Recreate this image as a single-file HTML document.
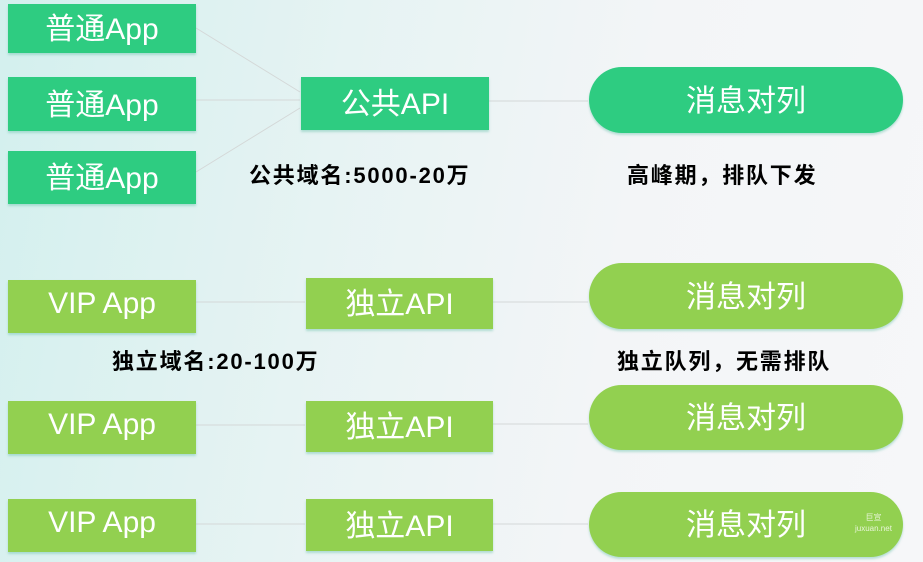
<!DOCTYPE html>
<html><head><meta charset="utf-8"><style>
body{margin:0;width:923px;height:562px;overflow:hidden;position:relative;
background:linear-gradient(100deg,#d3f0ee 0%,#e6f3f3 35%,#f3f5f7 65%,#f6f7f9 100%);
font-family:"Liberation Sans","Noto Sans CJK SC",sans-serif;}
.b{position:absolute;color:#fff;font-size:30px;display:flex;align-items:center;justify-content:center;box-shadow:0 2px 2px rgba(120,200,180,.5);box-sizing:border-box;padding-bottom:5px}
.g{background:#2ecc81}.l{background:#92d050}
.p{border-radius:34px;}
.t{position:absolute;font-weight:bold;font-size:22px;letter-spacing:1.8px;color:#000;white-space:nowrap}
svg{position:absolute;left:0;top:0}
</style></head><body>
<svg width="923" height="562"><g stroke="#d4d8d8" stroke-width="1" fill="none">
<line x1="196" y1="28" x2="300" y2="92"/><line x1="196" y1="100" x2="300" y2="100"/><line x1="196" y1="172" x2="300" y2="108"/>
<line x1="489" y1="101" x2="588" y2="101"/>
<line x1="196" y1="302" x2="305" y2="302"/><line x1="493" y1="302" x2="588" y2="302"/>
<line x1="196" y1="425" x2="305" y2="425"/><line x1="493" y1="424" x2="588" y2="424"/>
<line x1="196" y1="524" x2="305" y2="524"/><line x1="493" y1="524" x2="588" y2="524"/>
</g></svg>
<div class="b g" style="left:8px;top:4px;width:188px;height:49px">普通App</div>
<div class="b g" style="left:8px;top:77px;width:188px;height:54px">普通App</div>
<div class="b g" style="left:8px;top:151px;width:188px;height:53px">普通App</div>
<div class="b g" style="left:301px;top:77px;width:188px;height:53px">公共API</div>
<div class="b g p" style="left:589px;top:67px;width:314px;height:66px">消息对列</div>
<div class="t" style="left:249px;top:158px">公共域名:5000-20万</div>
<div class="t" style="left:627px;top:158px">高峰期，排队下发</div>
<div class="b l" style="left:8px;top:280px;width:188px;height:53px">VIP App</div>
<div class="b l" style="left:306px;top:278px;width:187px;height:51px">独立API</div>
<div class="b l p" style="left:589px;top:263px;width:314px;height:66px">消息对列</div>
<div class="t" style="left:112px;top:344px">独立域名:20-100万</div>
<div class="t" style="left:617px;top:344px">独立队列，无需排队</div>
<div class="b l" style="left:8px;top:401px;width:188px;height:53px">VIP App</div>
<div class="b l" style="left:306px;top:401px;width:187px;height:51px">独立API</div>
<div class="b l p" style="left:589px;top:385px;width:314px;height:65px">消息对列</div>
<div class="b l" style="left:8px;top:499px;width:188px;height:53px">VIP App</div>
<div class="b l" style="left:306px;top:499px;width:187px;height:52px">独立API</div>
<div class="b l p" style="left:589px;top:492px;width:314px;height:65px">消息对列</div>
<div style="position:absolute;left:855px;top:512px;color:#e8f5d8;font-size:8px;line-height:11px;text-align:center">巨宣<br>juxuan.net</div>
</body></html>
